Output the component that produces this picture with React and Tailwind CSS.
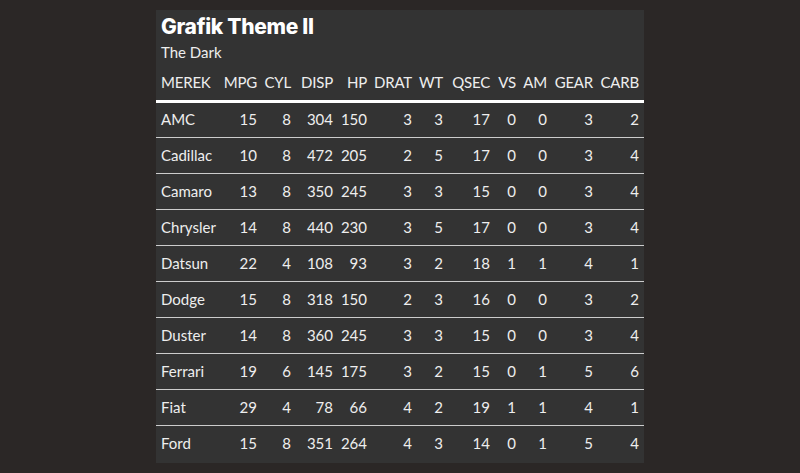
import React from 'react';

const columns = [
  { key: 'merek', label: 'MEREK', width: 'w-[66px]', left: true },
  { key: 'mpg', label: 'MPG', width: 'w-[40px]' },
  { key: 'cyl', label: 'CYL', width: 'w-[34px]' },
  { key: 'disp', label: 'DISP', width: 'w-[42px]' },
  { key: 'hp', label: 'HP', width: 'w-[34px]' },
  { key: 'drat', label: 'DRAT', width: 'w-[45px]' },
  { key: 'wt', label: 'WT', width: 'w-[31px]' },
  { key: 'qsec', label: 'QSEC', width: 'w-[47px]' },
  { key: 'vs', label: 'VS', width: 'w-[26px]' },
  { key: 'am', label: 'AM', width: 'w-[31px]' },
  { key: 'gear', label: 'GEAR', width: 'w-[46px]' },
  { key: 'carb', label: 'CARB', width: 'w-[46px]' },
];

const cars = [
  ['AMC', 15, 8, 304, 150, 3, 3, 17, 0, 0, 3, 2],
  ['Cadillac', 10, 8, 472, 205, 2, 5, 17, 0, 0, 3, 4],
  ['Camaro', 13, 8, 350, 245, 3, 3, 15, 0, 0, 3, 4],
  ['Chrysler', 14, 8, 440, 230, 3, 5, 17, 0, 0, 3, 4],
  ['Datsun', 22, 4, 108, 93, 3, 2, 18, 1, 1, 4, 1],
  ['Dodge', 15, 8, 318, 150, 2, 3, 16, 0, 0, 3, 2],
  ['Duster', 14, 8, 360, 245, 3, 3, 15, 0, 0, 3, 4],
  ['Ferrari', 19, 6, 145, 175, 3, 2, 15, 0, 1, 5, 6],
  ['Fiat', 29, 4, 78, 66, 4, 2, 19, 1, 1, 4, 1],
  ['Ford', 15, 8, 351, 264, 4, 3, 14, 0, 1, 5, 4],
];

export default function App() {
  return (
    <div className="min-h-[473px] w-full bg-[#2b2726] pt-[10px] font-['Lato','Liberation_Sans',sans-serif] text-[#eeeeee]">
      <div className="w-[488px] bg-[#333333] pb-[2px] ml-[156px]">
        {/* Caption */}
        <div className="px-[5px] pt-[4px]">
          <h1 className="font-['Inter',sans-serif] text-[21px] font-extrabold leading-[26px] tracking-[-0.3px] text-white">
            Grafik Theme II
          </h1>
          <p className="text-[15px] leading-[25px]">The Dark</p>
        </div>

        {/* Table */}
        <table className="w-[488px] table-fixed border-collapse text-[15px]">
          <thead>
            <tr className="h-[36px] border-b-[3px] border-white">
              {columns.map((col) => (
                <th
                  key={col.key}
                  className={`${col.width} ${col.left ? 'text-left pl-[5px]' : 'text-right pr-[5px]'} p-0 font-normal whitespace-nowrap tracking-[-0.2px]`}
                >
                  {col.label}
                </th>
              ))}
            </tr>
          </thead>
          <tbody>
            {cars.map((row, i) => (
              <tr
                key={row[0]}
                className={`h-[36px] ${i < cars.length - 1 ? 'border-b border-[#cccccc]' : ''}`}
              >
                {row.map((value, j) => (
                  <td
                    key={j}
                    className={`${j === 0 ? 'text-left pl-[5px]' : 'text-right pr-[5px]'} p-0 whitespace-nowrap`}
                  >
                    {value}
                  </td>
                ))}
              </tr>
            ))}
          </tbody>
        </table>
      </div>
    </div>
  );
}
